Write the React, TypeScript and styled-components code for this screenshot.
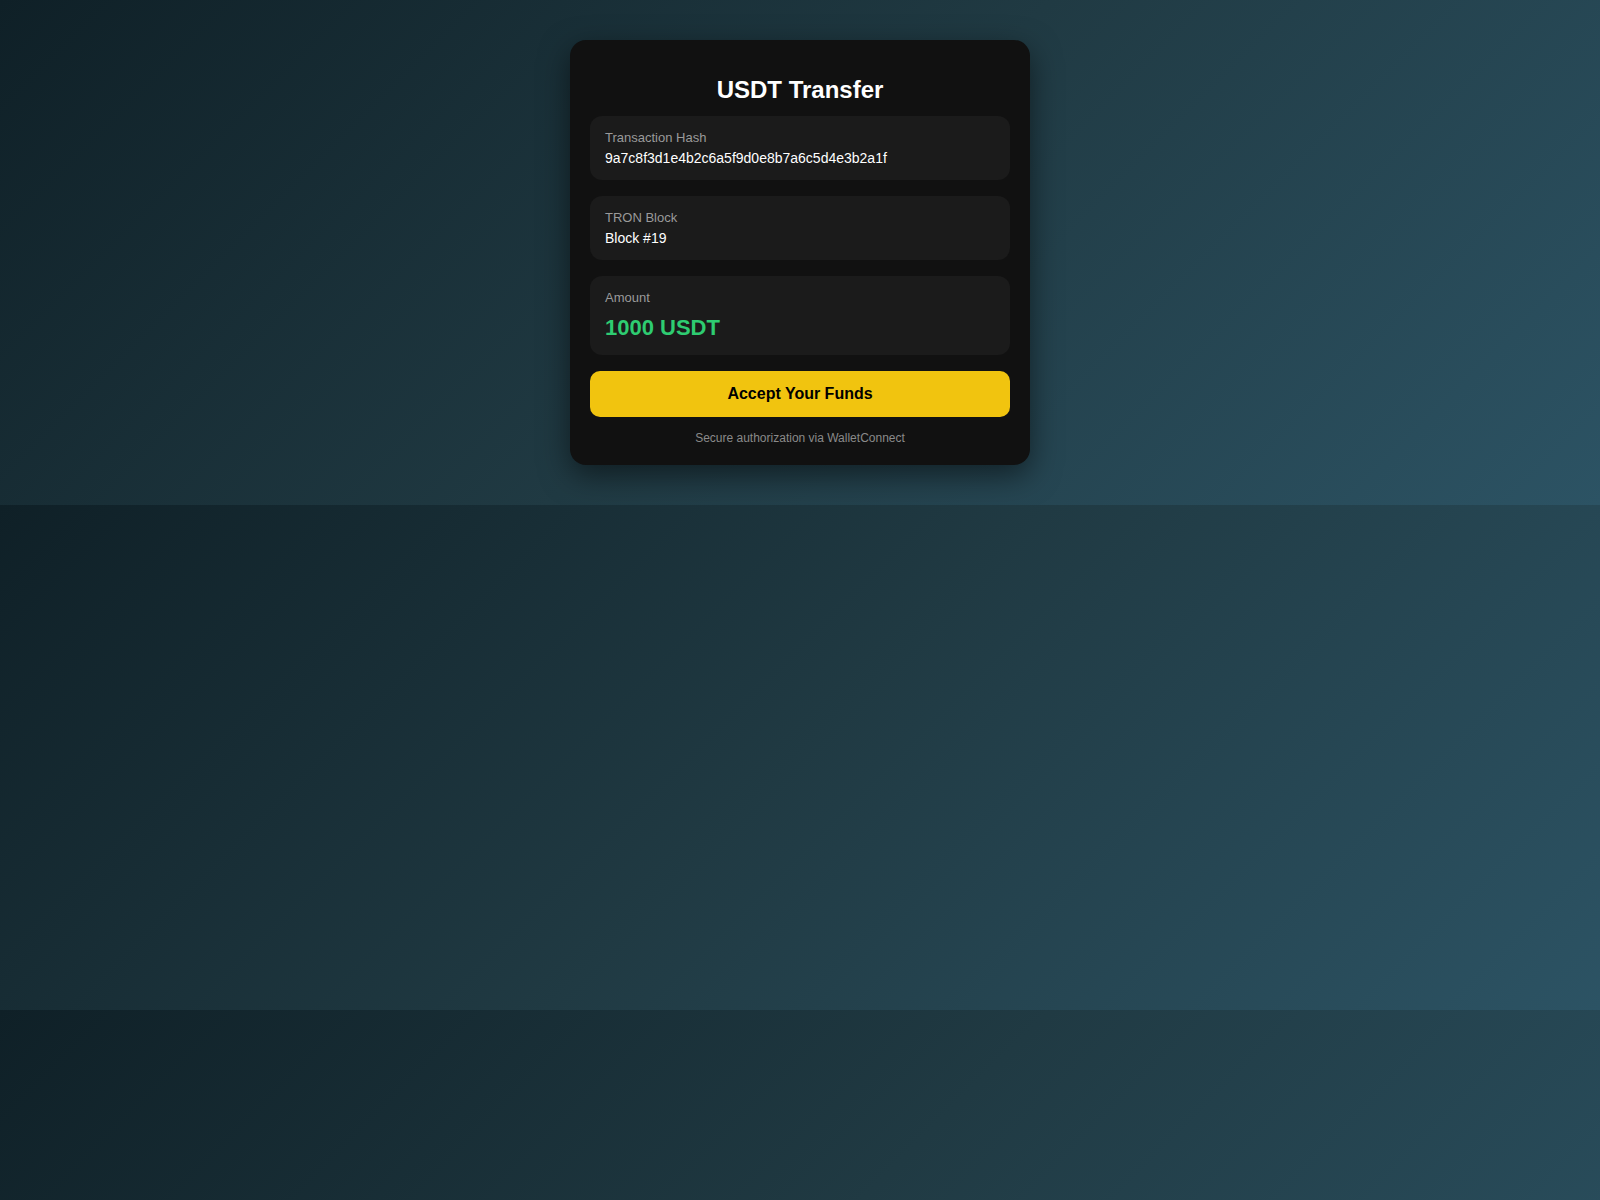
import React from "react";
import styled, { createGlobalStyle } from "styled-components";

const Global = createGlobalStyle`
  body {
    margin: 0;
    padding: 40px 20px;
    font-family: "Liberation Sans", Arial, sans-serif;
    background: linear-gradient(135deg, #0f2027, #203a43, #2c5364);
  }
`;

const Card = styled.div`
  width: 460px;
  margin: 0 auto;
  box-sizing: border-box;
  background: #111111;
  border-radius: 16px;
  padding: 36px 20px 20px;
  box-shadow: 0 10px 30px rgba(0,0,0,0.5);
  display: flex;
  flex-direction: column;
  gap: 16px;
`;

const Title = styled.h2`
  margin: 0 0 -4px;
  color: #fff;
  text-align: center;
  font-size: 24px;
  font-weight: bold;
`;

const Box = styled.div`
  background: #1b1b1b;
  border-radius: 12px;
  padding: 14px 15px;
`;

const Label = styled.div`
  color: #9a9a9a;
  font-size: 13px;
  margin-bottom: 5px;
`;

const Value = styled.div<{ $big?: boolean }>`
  color: ${(p) => (p.$big ? "#2ecc71" : "#fff")};
  font-size: ${(p) => (p.$big ? "22px" : "14px")};
  font-weight: ${(p) => (p.$big ? "bold" : "normal")};
  margin-top: ${(p) => (p.$big ? "10px" : "0")};
`;

const Button = styled.div`
  background: #f1c40f;
  color: #000;
  font-weight: bold;
  font-size: 16px;
  height: 46px;
  border-radius: 10px;
  display: flex;
  align-items: center;
  justify-content: center;
`;

const Note = styled.div`
  color: #8a8a8a;
  font-size: 12px;
  text-align: center;
  margin-top: -2px;
`;

export default function App() {
  return (
    <>
      <Global />
      <Card>
        <Title>USDT Transfer</Title>
        <Box>
          <Label>Transaction Hash</Label>
          <Value>9a7c8f3d1e4b2c6a5f9d0e8b7a6c5d4e3b2a1f</Value>
        </Box>
        <Box>
          <Label>TRON Block</Label>
          <Value>Block #19</Value>
        </Box>
        <Box>
          <Label>Amount</Label>
          <Value $big>1000 USDT</Value>
        </Box>
        <Button>Accept Your Funds</Button>
        <Note>Secure authorization via WalletConnect</Note>
      </Card>
    </>
  );
}
